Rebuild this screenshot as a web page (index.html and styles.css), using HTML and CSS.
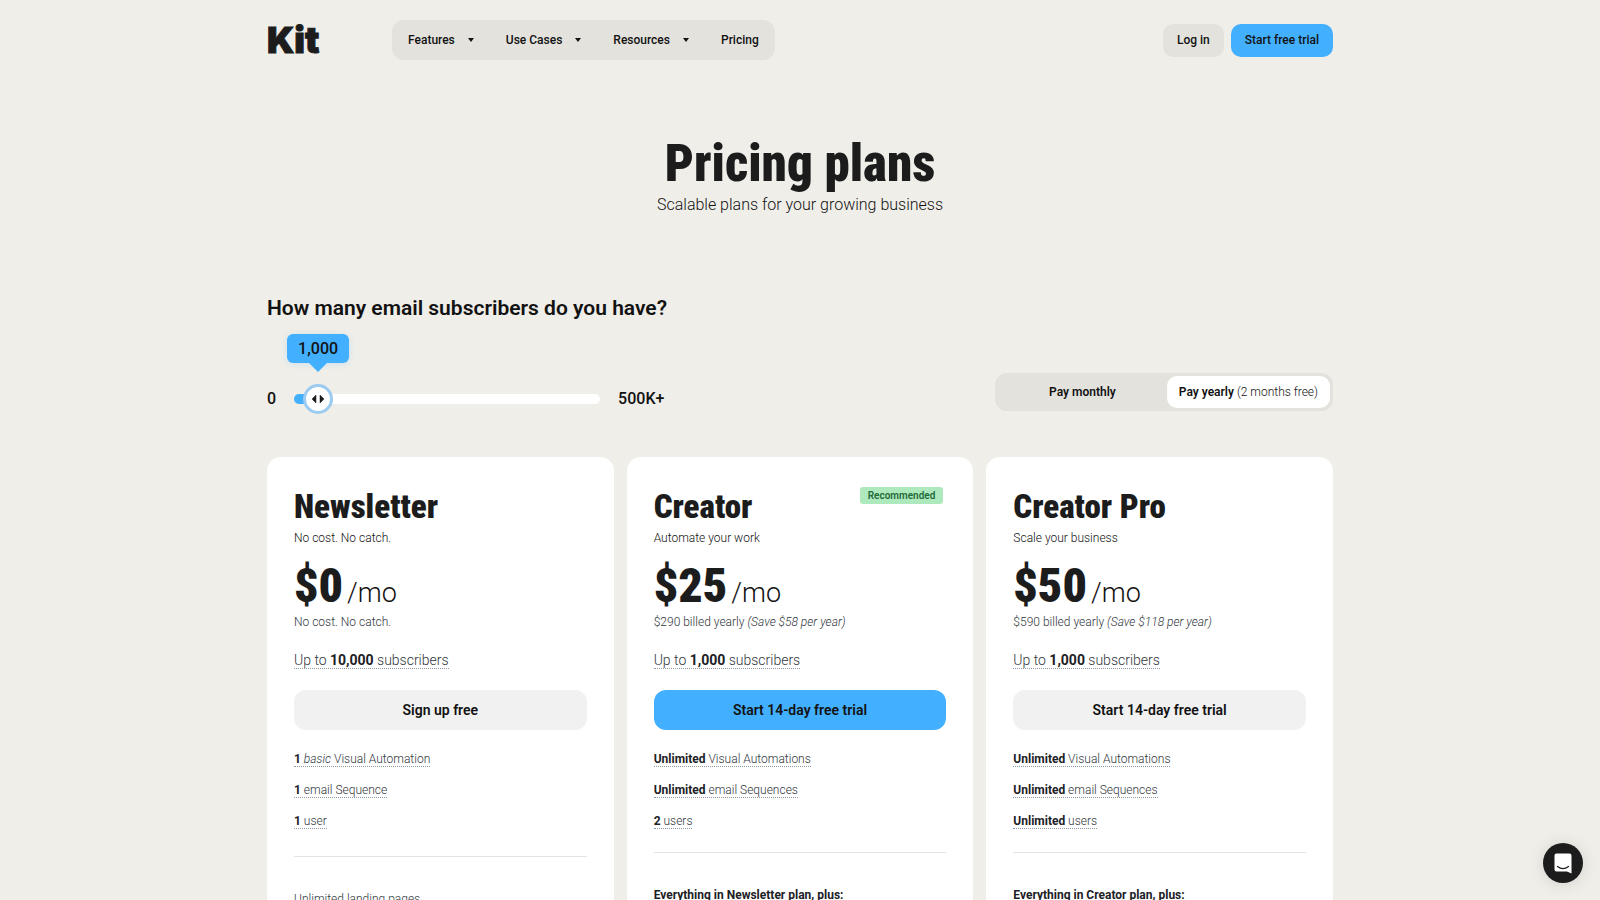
FILE: index.html
```html
<!DOCTYPE html>
<html lang="en">
<head>
<meta charset="utf-8">
<meta name="viewport" content="width=device-width, initial-scale=1">
<title>Pricing plans – Kit</title>
<link rel="stylesheet" href="styles.css">
</head>
<body>
<div class="page">
  <header class="header">
    <a class="logo" href="#">Kit</a>
    <nav class="nav">
      <button class="nav-item" type="button">Features <i class="caret"></i></button>
      <button class="nav-item" type="button">Use Cases <i class="caret"></i></button>
      <button class="nav-item" type="button">Resources <i class="caret"></i></button>
      <a class="nav-item" href="#">Pricing</a>
    </nav>
    <div class="account">
      <a class="small-btn" href="#">Log in</a>
      <a class="small-btn primary" href="#">Start free trial</a>
    </div>
  </header>

  <main>
    <section class="hero">
      <h1>Pricing plans</h1>
      <p>Scalable plans for your growing business</p>
    </section>

    <section class="controls">
      <div class="subscribers">
        <label class="question" for="subs">How many email subscribers do you have?</label>
        <div class="slider-row">
          <span>0</span>
          <div class="slider">
            <output class="bubble" for="subs">1,000</output>
            <input id="subs" type="range" min="0" max="500" value="17">
          </div>
          <span>500K+</span>
        </div>
      </div>
      <div class="billing">
        <button type="button">Pay monthly</button>
        <button type="button" class="active" aria-pressed="true">Pay yearly <span>(2 months free)</span></button>
      </div>
    </section>

    <section class="plans">
      <article class="plan">
        <h2>Newsletter</h2>
        <p class="tagline">No cost. No catch.</p>
        <p class="price"><strong>$0</strong><span>/mo</span></p>
        <p class="billed">No cost. No catch.</p>
        <p class="limit"><span class="hint">Up to <b>10,000</b> subscribers</span></p>
        <a class="cta" href="#">Sign up free</a>
        <ul class="features">
          <li><span class="hint"><b>1</b> <em>basic</em> Visual Automation</span></li>
          <li><span class="hint"><b>1</b> email Sequence</span></li>
          <li><span class="hint"><b>1</b> user</span></li>
        </ul>
        <p class="more spaced">Unlimited landing pages</p>
      </article>
      <article class="plan">
        <span class="badge">Recommended</span>
        <h2>Creator</h2>
        <p class="tagline">Automate your work</p>
        <p class="price"><strong>$25</strong><span>/mo</span></p>
        <p class="billed">$290 billed yearly <em>(Save $58 per year)</em></p>
        <p class="limit"><span class="hint">Up to <b>1,000</b> subscribers</span></p>
        <a class="cta primary" href="#">Start 14-day free trial</a>
        <ul class="features">
          <li><span class="hint"><b>Unlimited</b> Visual Automations</span></li>
          <li><span class="hint"><b>Unlimited</b> email Sequences</span></li>
          <li><span class="hint"><b>2</b> users</span></li>
        </ul>
        <p class="more"><b>Everything in Newsletter plan, plus:</b></p>
      </article>
      <article class="plan">
        <h2>Creator Pro</h2>
        <p class="tagline">Scale your business</p>
        <p class="price"><strong>$50</strong><span>/mo</span></p>
        <p class="billed">$590 billed yearly <em>(Save $118 per year)</em></p>
        <p class="limit"><span class="hint">Up to <b>1,000</b> subscribers</span></p>
        <a class="cta" href="#">Start 14-day free trial</a>
        <ul class="features">
          <li><span class="hint"><b>Unlimited</b> Visual Automations</span></li>
          <li><span class="hint"><b>Unlimited</b> email Sequences</span></li>
          <li><span class="hint"><b>Unlimited</b> users</span></li>
        </ul>
        <p class="more"><b>Everything in Creator plan, plus:</b></p>
      </article>
    </section>
  </main>
</div>
<button class="chat" type="button" aria-label="Open chat">
  <svg width="18" height="21" viewBox="0 0 18 21" aria-hidden="true">
    <path d="M2.500 0.500H15.500Q17.500 0.500 17.500 2.500V20.500L13 18.500H2.500Q0.500 18.500 0.500 16.500V2.500Q0.500 0.500 2.500 0.500Z" fill="#fff"/>
    <path d="M3.500 13.500Q9 17.800 14.500 13.500" fill="none" stroke="#1c1c1c" stroke-width="1.200" stroke-linecap="round"/>
  </svg>
</button>
</body>
</html>
```
FILE: styles.css
```css
* { box-sizing: border-box; }
body {
  margin: 0;
  background: #efeee9;
  color: #121212;
  font: 12px/18px Roboto, "Liberation Sans", sans-serif;
}
h1, h2, p, ul { margin: 0; padding: 0; }
a { color: inherit; text-decoration: none; }
button { border: 0; background: none; color: inherit; font: inherit; cursor: pointer; }
b { font-weight: 700; color: #1c2126; }

.page { max-width: 1066px; margin: 0 auto; }

.header { display: flex; align-items: center; padding-top: 20px; }
.logo { width: 125px; font: 900 36px/40px Inter, sans-serif; color: #1c1c1c; -webkit-text-stroke: 1px #1c1c1c; }
.nav { display: flex; height: 40px; border-radius: 12px; background: #e3e2dd; }
.nav-item { display: flex; align-items: center; gap: 13px; padding: 0 16px; font-weight: 500; }
.caret { border: 3px solid transparent; border-top: 4px solid #121212; border-bottom: 0; }
.account { display: flex; gap: 7px; margin-left: auto; }
.small-btn { padding: 8px 14px; line-height: 17px; border-radius: 10px; background: #e3e2dd; font-weight: 500; }
.primary { background: #43afff; }

.hero { padding-top: 75px; text-align: center; }
h1, h2, .price strong {
  font-family: "Roboto Condensed", "Liberation Sans Narrow", sans-serif;
  font-weight: 900;
  color: #1c1c1c;
}
h1 { font-size: 51px; line-height: 57px; }
.hero p { font-size: 16px; line-height: 26px; font-weight: 300; }

.controls { display: flex; justify-content: space-between; align-items: flex-end; padding-top: 76px; }
.question { display: block; font-size: 21px; line-height: 28px; font-weight: 600; }
.slider-row { display: flex; align-items: center; gap: 18px; padding-top: 62px; font-size: 16px; line-height: 30px; font-weight: 500; }
.slider { position: relative; display: flex; width: 306px; }
.slider input {
  appearance: none;
  width: 100%;
  height: 10px;
  margin: 0;
  border-radius: 5px;
  background: linear-gradient(to right, #43afff 24px, #fff 24px);
}
.slider input::-webkit-slider-thumb {
  appearance: none;
  width: 30px;
  height: 30px;
  border: 3px solid #9bcbf0;
  border-radius: 50%;
  background: #fff url("data:image/svg+xml,%3Csvg xmlns='http://www.w3.org/2000/svg' width='14' height='8'%3E%3Cpath d='M5 0V8L1 4ZM9 0V8L13 4Z' fill='%231c1c1c' stroke='%231c1c1c' stroke-width='.5'/%3E%3C/svg%3E") center no-repeat;
}
.bubble {
  position: absolute;
  left: 24px;
  bottom: 41px;
  transform: translateX(-50%);
  padding: 0 11px;
  line-height: 29px;
  border-radius: 6px;
  background: #43afff;
  box-shadow: 0 1px 6px #43afff33;
}
.bubble::after {
  content: "";
  position: absolute;
  top: 100%;
  left: 50%;
  margin-left: -9px;
  border: 9px solid transparent;
  border-top-color: #43afff;
  border-bottom: 0;
}
.billing { display: grid; grid-template-columns: 1fr auto; width: 338px; margin-bottom: 3px; padding: 3px; border-radius: 12px; background: #e3e2dd; }
.billing button { padding: 0 12px; line-height: 32px; border-radius: 10px; font-weight: 600; white-space: nowrap; }
.billing .active { background: #fff; }
.billing span { font-weight: 300; }

.plans { display: grid; grid-template-columns: repeat(3, 1fr); gap: 13px; padding-top: 43px; }
.plan { position: relative; padding: 27px 27px 48px; border-radius: 14px; background: #fff; }
h2 { font-size: 33px; line-height: 45px; }
.tagline { line-height: 18px; font-weight: 300; }
.price { display: flex; align-items: baseline; gap: 4px; padding-top: 11px; }
.price strong { font-size: 48px; line-height: 55px; }
.price span { font-size: 27px; line-height: 32px; font-weight: 300; }
.billed, .features, .more { font-weight: 300; color: #30363c; }
.limit { padding-top: 17px; font-size: 14px; line-height: 24px; font-weight: 300; color: #30363c; }
.hint { padding-bottom: 0; border-bottom: 1px dotted #8d98a5; }
.cta { display: block; margin-top: 18px; border-radius: 12px; background: #f1f1f1; font-size: 14px; line-height: 40px; font-weight: 600; text-align: center; }
.cta.primary { background: #43afff; }
.features { display: grid; gap: 13px; padding-top: 20px; list-style: none; }
.more { margin-top: 22px; padding-top: 33px; border-top: 1px solid #e2e4e6; }
.more.spaced { margin-top: 26px; }
.badge { position: absolute; top: 30px; right: 30px; padding: 0 8px; border-radius: 3px; background: #aee8bd; color: #1f6b3a; font-size: 10px; line-height: 17px; font-weight: 600; }

.chat {
  position: fixed;
  right: 17px;
  bottom: 17px;
  display: grid;
  place-items: center;
  width: 40px;
  height: 40px;
  padding: 0;
  border-radius: 50%;
  background: #1c1c1c;
  box-shadow: 0 1px 16px #0000001f;
}
```
